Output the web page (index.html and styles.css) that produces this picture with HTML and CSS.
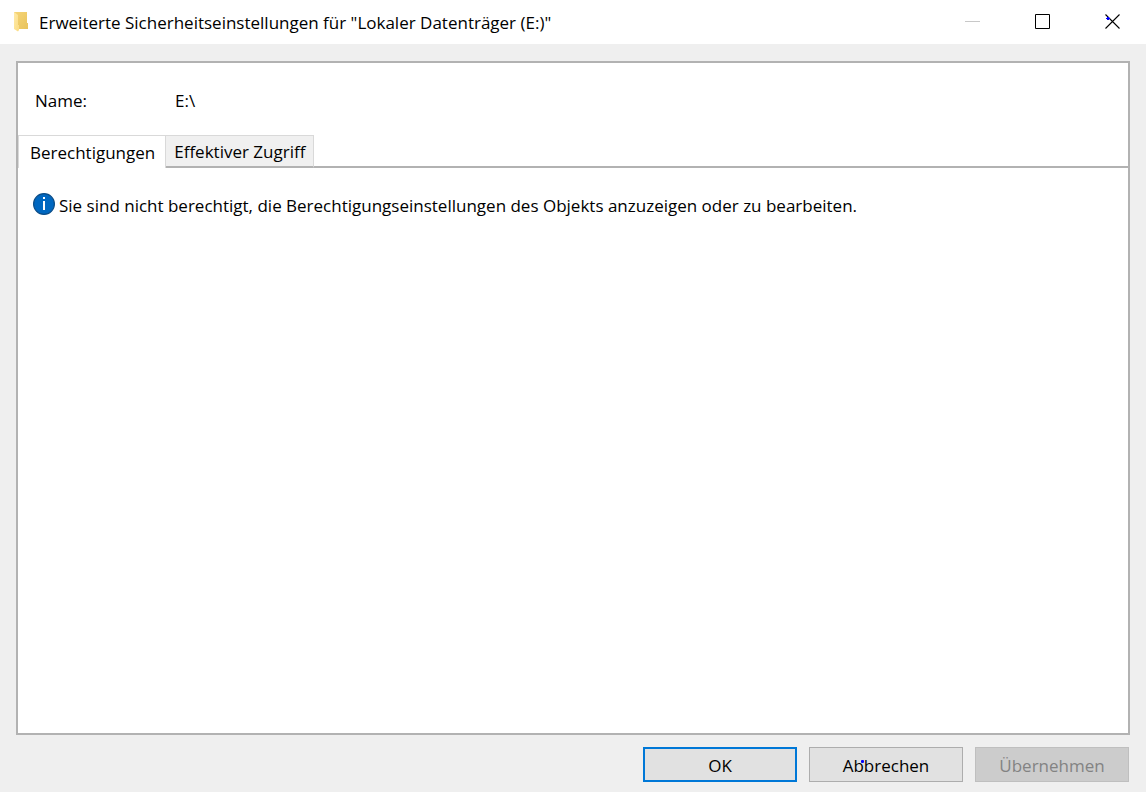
FILE: index.html
```html
<!DOCTYPE html>
<html lang="de">
<head>
    <meta charset="UTF-8">
    <meta name="viewport" content="width=device-width, initial-scale=1.0">
    <link rel="stylesheet" href="styles.css">
    <title>Erweiterte Sicherheitseinstellungen</title>
</head>
<body>
    <header class="titlebar">
        <svg class="folder" width="16" height="20" viewBox="0 0 16 20" aria-hidden="true">
            <defs>
                <linearGradient id="back" x1="0" y1="0" x2="1" y2="1">
                    <stop offset="0" stop-color="#f6d578"/>
                    <stop offset="1" stop-color="#e8c35c"/>
                </linearGradient>
                <linearGradient id="front" x1="0" y1="0" x2="1" y2="1">
                    <stop offset="0" stop-color="#ffeaa8"/>
                    <stop offset="1" stop-color="#fbdc82"/>
                </linearGradient>
            </defs>
            <path d="M1 0h13v11h1v6H1z" fill="url(#back)"/>
            <path d="M1 0l4 3v10h1v5l-1 1.500-4-2.500z" fill="url(#front)"/>
        </svg>
        <h1 class="title">Erweiterte Sicherheitseinstellungen für "Lokaler Datenträger (E:)"</h1>
        <div class="window-buttons">
            <button class="window-button" aria-label="Minimieren" disabled>
                <svg width="16" height="16" viewBox="0 0 16 16"><path d="M0 7.500h15" stroke="#c8c8c8"/></svg>
            </button>
            <button class="window-button" aria-label="Maximieren">
                <svg width="16" height="16" viewBox="0 0 16 16"><path d="M.5.5h14v14H.5z" fill="none" stroke="#000"/></svg>
            </button>
            <button class="window-button" aria-label="Schließen">
                <svg width="16" height="16" viewBox="0 0 16 16">
                    <path d="M.5.500l14 14M14.500.500l-14 14" stroke="#000" stroke-width="1.100"/>
                    <path d="M2 3h2v1h1v1H4v1H2V5H1V4h1z" fill="#00f"/>
                </svg>
            </button>
        </div>
    </header>

    <main class="panel">
        <dl class="object">
            <dt>Name:</dt>
            <dd>E:\</dd>
        </dl>

        <div class="tabs" role="tablist">
            <button class="tab active" id="tab-perm" role="tab" aria-selected="true" aria-controls="perm">Berechtigungen</button>
            <button class="tab" role="tab" aria-selected="false">Effektiver Zugriff</button>
            <div class="tab-line" role="presentation"></div>
        </div>

        <section class="message" id="perm" role="tabpanel" aria-labelledby="tab-perm">
            <svg class="info" width="22" height="22" viewBox="0 0 22 22" aria-hidden="true">
                <circle cx="11" cy="11" r="10.400" fill="#0067c0" stroke="#0a4c87" stroke-width="1.200"/>
                <path d="M10 8h2v9h-2zM10 4h2v2h-2z" fill="#fff"/>
            </svg>
            <p>Sie sind nicht berechtigt, die Berechtigungseinstellungen des Objekts anzuzeigen oder zu bearbeiten.</p>
        </section>
    </main>

    <footer class="actions">
        <button class="action default">OK</button>
        <button class="action cancel">Abbrechen</button>
        <button class="action" disabled>Übernehmen</button>
    </footer>
</body>
</html>
```

FILE: styles.css
```css
* {
    box-sizing: border-box;
}

body {
    margin: 0;
    min-height: 100vh;
    display: flex;
    flex-direction: column;
    background-color: #efefef;
    color: #000;
    font-family: "Open Sans", "Noto Sans", sans-serif;
    font-size: 17px;
    line-height: 24px;
}

button {
    margin: 0;
    padding: 0;
    color: inherit;
    font: inherit;
}

/* title bar */
.titlebar {
    display: flex;
    align-items: center;
    height: 44px;
    padding-left: 13px;
    background-color: #fff;
}

.folder {
    flex: none;
}

.title {
    flex: 1;
    margin: 0 0 0 10px;
    padding-top: 2px;
    font-size: 17px;
    font-weight: normal;
    white-space: nowrap;
}

.window-buttons {
    display: flex;
}

.window-button {
    display: flex;
    align-items: center;
    width: 70px;
    height: 44px;
    padding-left: 29px;
    border: none;
    background: none;
}

/* content */
.panel {
    flex: 1;
    margin: 17px 16px 0;
    border: 2px solid #b2b2b2;
    background-color: #fff;
}

.object {
    display: flex;
    margin: 0;
    padding: 26px 17px 22px;
}

.object dt {
    width: 140px;
}

.object dd {
    margin: 0;
}

.tabs {
    display: flex;
    height: 33px;
}

.tab {
    padding: 2px 8px 0;
    border: 1px solid #d9d9d9;
    border-left: none;
    border-bottom: 2px solid #b2b2b2;
    background-color: #f0f0f0;
}

.tab.active {
    padding: 2px 10px 0 11px;
    border-left: 1px solid #d9d9d9;
    border-bottom: none;
    background-color: #fff;
}

.tab-line {
    flex: 1;
    border-bottom: 2px solid #b2b2b2;
}

.message {
    display: flex;
    align-items: flex-start;
    gap: 4px;
    padding: 25px 15px;
}

.message p {
    margin: 1px 0 0;
}

.info {
    flex: none;
}

/* buttons */
.actions {
    display: flex;
    justify-content: flex-end;
    gap: 12px;
    padding: 12px 17px 10px;
}

.action {
    position: relative;
    width: 154px;
    height: 35px;
    padding-top: 2px;
    border: 1px solid #adadad;
    background-color: #e1e1e1;
}

.action.default {
    border: 2px solid #0078d7;
}

.action:disabled {
    border-color: #bfbfbf;
    background-color: #ccc;
    color: #838383;
}

/* small blue mark on the label */
.cancel::after {
    content: "";
    position: absolute;
    top: 12px;
    left: 51px;
    width: 3px;
    height: 3px;
    border-radius: 1px;
    background-color: #00f;
}
```
